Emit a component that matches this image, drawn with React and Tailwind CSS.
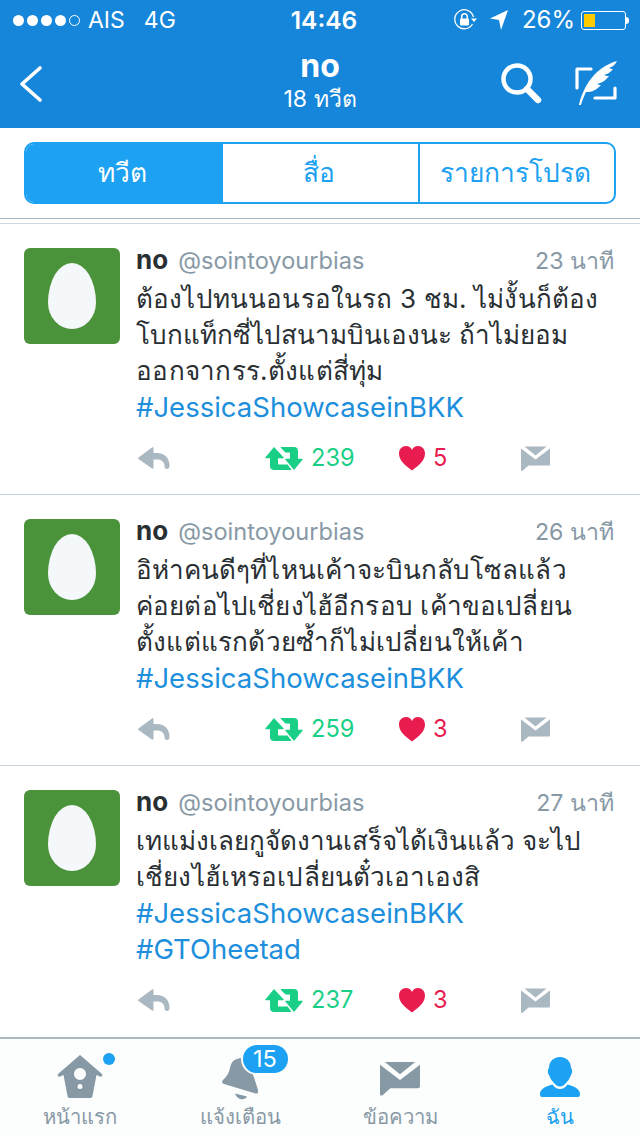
const FONT = "font-['Inter','Noto_Sans','Noto_Sans_CJK_SC',sans-serif]";

function Reply() {
  return (
    <svg width="32" height="23" viewBox="0 0 32 23"><path fill="#AAB8C2" d="M0.5 10.5 L14 0.5 C15 0 15.5 0.5 15.5 1.5 V6 H19 C26.5 6 31.5 11 31.5 18.5 C31.5 21 30.5 22 29 22 C27.5 22 26.5 21 26.5 19 C26.5 15 23.5 12.5 19 12.5 H15.5 V20.5 C15.5 21.5 15 22 14 21.5 L0.5 12 C0 11.6 0 11 0.5 10.5 Z" /></svg>
  );
}
function Retweet() {
  return (
    <svg width="38" height="23" viewBox="0 0 38 23">
      <path fill="#19CF86" d="M9 0 L18.5 10.2 C19 10.8 18.8 11.2 18 11.2 H13 V16.5 C13 17.2 13.3 17.5 14 17.5 H22.5 L26 22 C26.4 22.6 26 23 25.5 23 H9 C6.5 23 5 21.5 5 19 V11.2 H1 C0.2 11.2 0 10.8 0.5 10.2 Z" />
      <path fill="#19CF86" d="M16.5 0 H29 C31.5 0 33 1.5 33 4 V11.8 H37 C37.8 11.8 38 12.2 37.5 12.8 L29 23 L20.5 12.8 C20 12.2 20.2 11.8 21 11.8 H25 V6.5 C25 5.8 24.7 5.5 24 5.5 H20.5 L16 1 C15.6 0.5 15.9 0 16.5 0 Z" />
    </svg>
  );
}
function Heart() {
  return (
    <svg width="26" height="25" viewBox="0 0 26 25"><path fill="#E81C4F" d="M13 24.5 C5 18.5 0 14 0 7.5 C0 3 3.2 0 7 0 C9.8 0 12 1.6 13 4 C14 1.6 16.2 0 19 0 C22.8 0 26 3 26 7.5 C26 14 21 18.5 13 24.5 Z" /></svg>
  );
}
function Dm({ w = 29, h = 25, color = "#AAB8C2" }) {
  return (
    <svg width={w} height={h} viewBox="0 0 29 25">
      <path fill={color} d="M0 2.5 L14.5 13.5 L29 2.5 V18 C29 19 28.5 19.5 27.5 19.5 H7.5 L1.8 24.6 C1 25.2 0 24.8 0 24 Z" />
      <path fill={color} d="M3.5 0.5 H25.5 L14.5 9.5 Z" />
    </svg>
  );
}

function Tweet({ time, lines, rt, likes, last }) {
  return (
    <div className={`h-[271px] pl-6 pr-[26px] pt-6 ${last ? "" : "border-b border-[#c9d4dc]"}`}>
      <div className="flex gap-4">
        <div className="w-24 h-24 shrink-0 rounded-md bg-[#4b933a] flex items-center justify-center">
          <div className="w-[48px] h-[66px] bg-[#f5f8fa] rounded-[50%_50%_50%_50%/60%_60%_40%_40%]" />
        </div>
        <div className="flex-1 min-w-0">
          <div className="flex items-baseline h-[26px] -mt-[1px] leading-[26px]">
            <span className="text-[26px] font-bold text-[#292f33]">no</span>
            <span className="ml-[10px] text-[23.6px] text-[#8899a6]">@sointoyourbias</span>
            <span className="ml-auto text-[23.2px] text-[#8899a6]">{time}</span>
          </div>
          <div className="mt-[8px] h-[144px] text-[26px] leading-[36px] text-[#292f33] whitespace-nowrap">
            {lines.map(([text, cls], i) => (
              <div key={i} className={cls}>{text}</div>
            ))}
          </div>
          <div className="flex items-center h-[26px] mt-[20px] ml-[2px]">
            <div className="w-[127px]"><Reply /></div>
            <div className="w-[134px] flex items-center gap-2">
              <Retweet />
              <span className="text-[23.6px] text-[#19cf86]">{rt}</span>
            </div>
            <div className="w-[122px] flex items-center gap-[8px]">
              <Heart />
              <span className="text-[23.6px] text-[#e81c4f]">{likes}</span>
            </div>
            <Dm />
          </div>
        </div>
      </div>
    </div>
  );
}

function Tab({ icon, label, active }) {
  return (
    <div className="flex-1 flex flex-col items-center">
      <div className="h-[44px] flex items-end">{icon}</div>
      <div className={`mt-[7px] text-[20.3px] leading-[26px] ${active ? "text-[#1da1f2]" : "text-[#8899a6]"}`}>{label}</div>
    </div>
  );
}

const HASH = "text-[#1d8fdc] text-[27.5px]";

export default function App() {
  return (
    <div className={`w-[640px] h-[1136px] bg-white overflow-hidden flex flex-col ${FONT}`}>
      {/* header */}
      <div className="h-[128px] shrink-0 bg-[#1686da] text-white flex flex-col">
        <div className="h-[40px] flex items-center pl-[13px] pr-[11px] relative">
          <div className="flex items-center gap-[3px]">
            {[0, 1, 2, 3].map((i) => <span key={i} className="w-[11px] h-[11px] rounded-full bg-white" />)}
            <span className="w-[11px] h-[11px] rounded-full border border-white" />
          </div>
          <span className="ml-[8px] text-[23px]">AIS</span>
          <span className="ml-[19px] text-[23px]">4G</span>
          <span className="absolute left-0 right-0 pl-[8px] text-center text-[24.5px] font-semibold pointer-events-none">14:46</span>
          <div className="ml-auto flex items-center">
            <svg width="24" height="22" viewBox="0 0 24 22" fill="none" stroke="#fff" strokeWidth="1.3">
              <path d="M18.5 15 A9.5 9.5 0 1 1 19.5 8" />
              <path d="M17 9.5 H23 L20 13 Z" fill="#fff" stroke="none" />
              <rect x="6" y="9.5" width="9" height="7" rx="1" fill="#fff" stroke="none" />
              <path d="M7.7 10 V7.5 A2.8 2.8 0 0 1 13.3 7.5 V10" strokeWidth="1.5" />
            </svg>
            <svg className="ml-[12px]" width="18" height="20" viewBox="0 0 18 20"><path fill="#fff" d="M0 8.5 L18 0 L11 20 L9 10 Z" /></svg>
            <span className="ml-[14px] text-[24px]">26%</span>
            <div className="ml-[6px] w-[45px] h-[19px] rounded-[3px] border border-white p-[2px]">
              <div className="w-[11px] h-full bg-[#ffcc00]" />
            </div>
            <div className="w-[3px] h-[7px] bg-white rounded-r-sm" />
          </div>
        </div>
        <div className="flex-1 flex items-center relative">
          <svg className="ml-[19px]" width="24" height="38" viewBox="0 0 24 38" fill="none" stroke="#fff" strokeWidth="3.6" strokeLinecap="round" strokeLinejoin="round"><path d="M21 3 L3 19 L21 35" /></svg>
          <div className="absolute left-0 right-0 top-[8px] text-center">
            <div className="text-[32px] leading-[36px] font-bold">no</div>
            <div className="text-[23px] leading-[26px] mt-[2px]">18 ทวีต</div>
          </div>
          <div className="ml-auto flex items-center gap-[32px] pr-[21px]">
            <svg width="42" height="42" viewBox="0 0 42 42" fill="none" stroke="#fff" strokeLinecap="round"><circle cx="16" cy="16" r="13.5" strokeWidth="4.5" /><path d="M26 26 L37 37" strokeWidth="6.5" /></svg>
            <svg width="44" height="46" viewBox="0 0 44 46">
              <path d="M16 8 H2 V27" fill="none" stroke="#fff" strokeWidth="3.2" strokeLinecap="round" strokeLinejoin="round" />
              <path d="M20 37 H40 V27" fill="none" stroke="#fff" strokeWidth="3.2" strokeLinecap="round" strokeLinejoin="round" />
              <path fill="#fff" d="M4 44 C8 26 20 6 42 0 C40 4 37 6 34 7 C36 8 37 8 38 8 C35 12 32 13 29 14 C31 15 33 15 34 15 C30 20 27 22 22 23 C24 24 25 24 26 24 C20 31 14 31 11 31 C9 35 7 40 6 44 Z" />
            </svg>
          </div>
        </div>
      </div>

      {/* segmented */}
      <div className="h-[91px] shrink-0 px-6 pt-[14px] border-b border-[#aab8c2]">
        <div className="h-[62px] flex rounded-[10px] border-2 border-[#1da1f2] overflow-hidden text-[26.3px] text-[#1da1f2]">
          <div className="w-[197px] pr-[4px] bg-[#1da1f2] text-white flex items-center justify-center">ทวีต</div>
          <div className="w-[197px] pr-[4px] border-r-2 border-[#1da1f2] flex items-center justify-center">สื่อ</div>
          <div className="flex-1 pr-[3px] flex items-center justify-center tracking-[0.1px]">รายการโปรด</div>
        </div>
      </div>
      <div className="h-[5px] shrink-0 border-b border-[#ccd6dd]" />

      {/* tweets */}
      <div className="flex-1 min-h-0">
        <Tweet time="23 นาที" rt="239" likes="5" lines={[
          ["ต้องไปทนนอนรอในรถ 3 ชม. ไม่งั้นก็ต้อง", "tracking-[0.16px]"],
          ["โบกแท็กซี่ไปสนามบินเองนะ ถ้าไม่ยอม", ""],
          ["ออกจากรร.ตั้งแต่สี่ทุ่ม", "tracking-[0.26px]"],
          ["#JessicaShowcaseinBKK", HASH],
        ]} />
        <Tweet time="26 นาที" rt="259" likes="3" lines={[
          ["อิห่าคนดีๆที่ไหนเค้าจะบินกลับโซลแล้ว", "tracking-[0.06px]"],
          ["ค่อยต่อไปเชี่ยงไฮ้อีกรอบ เค้าขอเปลี่ยน", "tracking-[0.16px]"],
          ["ตั้งแต่แรกด้วยซ้ำก็ไม่เปลี่ยนให้เค้า", "tracking-[0.2px]"],
          ["#JessicaShowcaseinBKK", HASH],
        ]} />
        <Tweet last time="27 นาที" rt="237" likes="3" lines={[
          ["เทแม่งเลยกูจัดงานเสร็จได้เงินแล้ว จะไป", ""],
          ["เชี่ยงไฮ้เหรอเปลี่ยนตั๋วเอาเองสิ", "tracking-[0.13px]"],
          ["#JessicaShowcaseinBKK", HASH],
          ["#GTOheetad", HASH],
        ]} />
      </div>

      {/* tab bar */}
      <div className="h-[99px] shrink-0 border-t-2 border-[#aab8c2] bg-[#fcfdfd] flex pt-[14px]">
        <Tab label="หน้าแรก" icon={
          <div className="relative translate-y-[1px]">
            <svg className="block" width="46" height="43" viewBox="0 0 46 43"><path fill="#8899a6" fillRule="evenodd" d="M23 0 L45 19 C46 21 44 23 42 21 L39.5 20 L35.5 41 C35.3 42.5 34.5 43 33 43 H13 C11.5 43 10.7 42.5 10.5 41 L6.5 20 L4 21 C2 23 0 21 1 19 Z M23 13 A6 6 0 1 0 23 25 A6 6 0 1 0 23 13 Z M23 29 A2.5 2.5 0 1 0 23 34 A2.5 2.5 0 1 0 23 29 Z" /></svg>
            <span className="absolute -right-[12px] -top-[2px] w-3 h-3 rounded-full bg-[#1da1f2]" />
          </div>
        } />
        <Tab label="แจ้งเตือน" icon={
          <div className="relative translate-y-[3px]">
            <svg className="block" width="37" height="42" viewBox="0 0 37 42">
              <path fill="#8899a6" d="M15 1 C20 -1 25 0 27 5 C30 14 33 22 36 32 C36.5 34.5 35.5 36 33.5 35.5 L2 26 C0 25 -0.5 23.5 1 22 C5 18 7 15 8 10 C9 5 11 2 15 1 Z" />
              <path fill="#8899a6" d="M13 35.5 L25 38.5 C23 43 15 42 13 35.5 Z" />
            </svg>
            <span className="absolute left-[21px] -top-[13px] h-[28px] w-[45px] rounded-full bg-[#1da1f2] text-white text-[23.5px] leading-[28px] text-center ring-2 ring-[#fcfdfd]">15</span>
          </div>
        } />
        <Tab label="ข้อความ" icon={<div className="-translate-y-[1px]"><Dm w={40} h={35} color="#8899a6" /></div>} />
        <Tab label="ฉัน" active icon={
          <svg className="block" width="42" height="40" viewBox="0 0 42 40">
            <path fill="#1da1f2" d="M21 0 C28 0 32 5 32 11 C33.5 12 33.5 16 32 18 C31 21 29 24 27 26 C25 28.5 23 29.5 21 29.5 C19 29.5 17 28.5 15 26 C13 24 11 21 10 18 C8.5 16 8.5 12 10 11 C10 5 14 0 21 0 Z" />
            <path fill="#1da1f2" d="M13.5 27.5 C16 31 18 32 21 32 C24 32 26 31 28.5 27.5 C33 29 41 31 41 37 V37.5 C41 39.5 40 40 38 40 H4 C2 40 1 39.5 1 37.5 V37 C1 31 9 29 13.5 27.5 Z" />
          </svg>
        } />
      </div>
    </div>
  );
}
